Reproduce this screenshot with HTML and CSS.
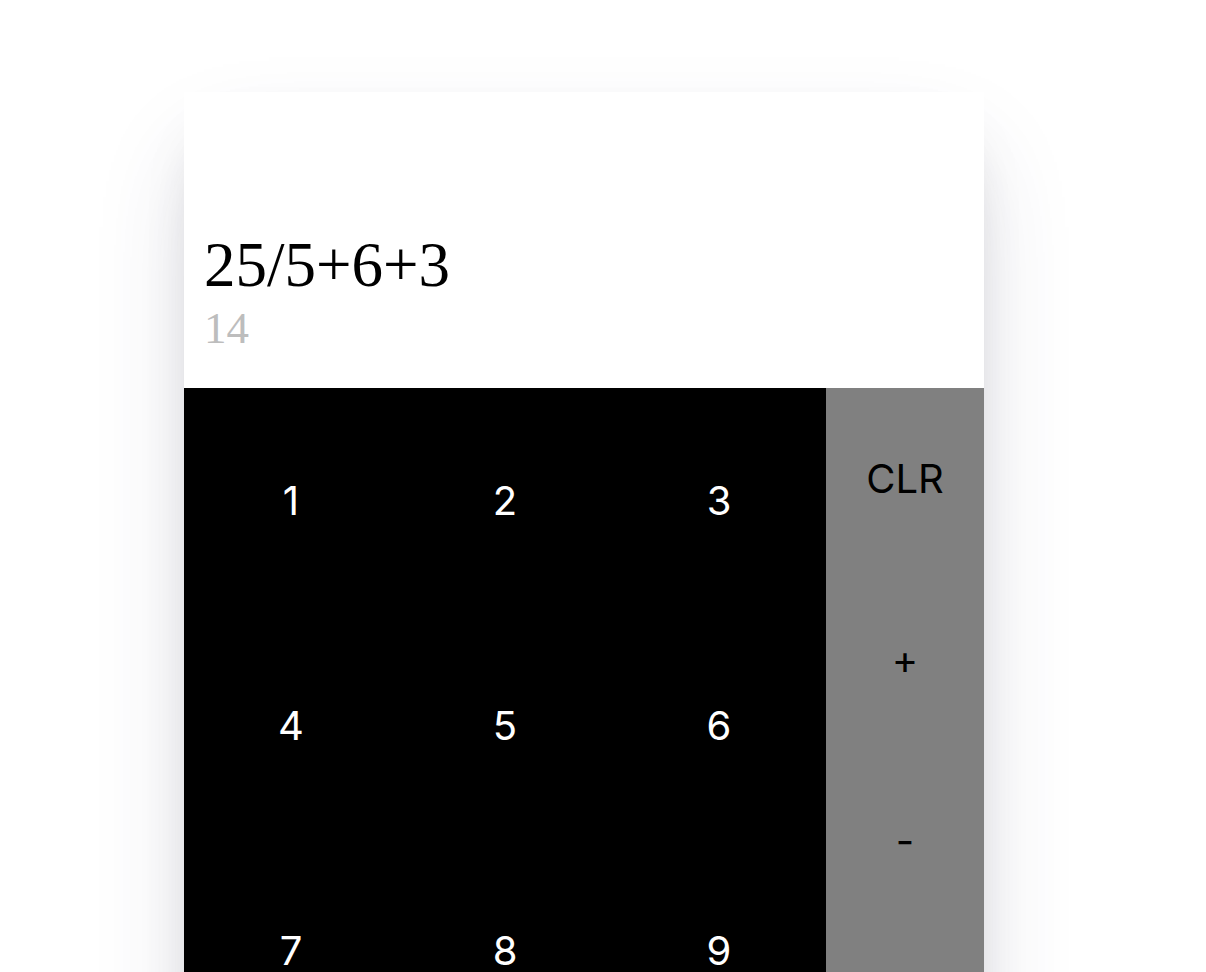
FILE: index.html
```html
<!DOCTYPE html>
<html>
<head>
<meta charset="utf-8">
<link rel="stylesheet" href="styles.css">
</head>
<body>
<div class="page">
  <div class="calc">
    <div class="display">
      <div class="expr">25/5+6+3</div>
      <div class="result">14</div>
    </div>
    <div class="pad">
      <div class="digits">
        <button class="key">1</button>
        <button class="key">2</button>
        <button class="key">3</button>
        <button class="key">4</button>
        <button class="key">5</button>
        <button class="key">6</button>
        <button class="key">7</button>
        <button class="key">8</button>
        <button class="key">9</button>
        <button class="key">.</button>
        <button class="key">0</button>
        <button class="key">=</button>
      </div>
      <div class="ops">
        <button class="op">CLR</button>
        <button class="op">+</button>
        <button class="op">-</button>
        <button class="op">*</button>
        <button class="op">/</button>
      </div>
    </div>
  </div>
</div>
</body>
</html>
```
FILE: styles.css
```css
html, body {
  margin: 0;
  padding: 0;
  background: #fff;
}
.page {
  padding: 92px 0 0 184px;
}
.calc {
  width: 800px;
  background: #fff;
  box-shadow: rgba(50, 50, 93, 0.2) 0px 50px 100px -20px, rgba(0, 0, 0, 0.22) 0px 30px 60px -30px;
}
.display {
  height: 296px;
  box-sizing: border-box;
  padding: 0 20px 34px 20px;
  display: flex;
  flex-direction: column;
  justify-content: flex-end;
  font-family: "Liberation Serif", "Times New Roman", serif;
}
.expr {
  font-size: 63px;
  color: #000;
}
.result {
  font-size: 45px;
  color: #bdbdbd;
}
.pad {
  display: flex;
}
.digits {
  width: 642px;
  background: #000;
  display: grid;
  grid-template-columns: repeat(3, 1fr);
  grid-auto-rows: 225px;
}
.ops {
  flex: 1;
  background: #808080;
  display: grid;
  grid-auto-rows: 181px;
}
.key, .op {
  border: none;
  background: transparent;
  font-family: Inter, "Noto Sans", sans-serif;
  font-size: 40px;
  padding: 0;
  margin: 0;
}
.key {
  color: #fff;
}
.op {
  color: #000;
}
```
